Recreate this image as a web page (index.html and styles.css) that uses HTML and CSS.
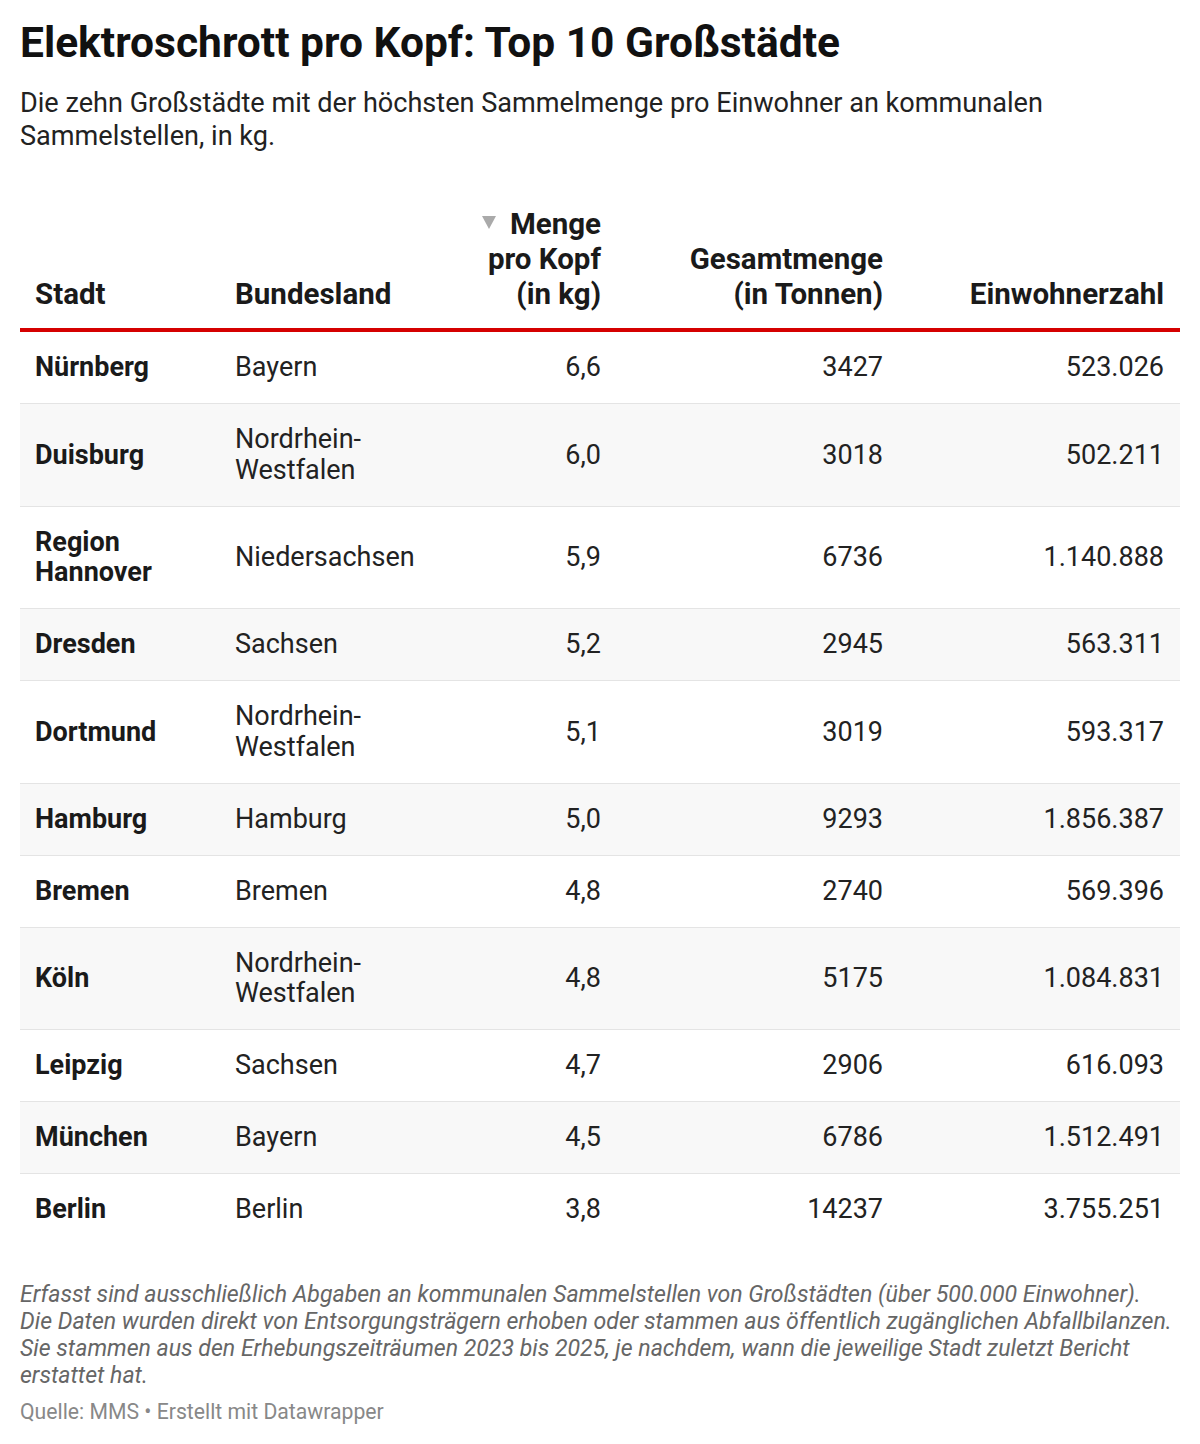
FILE: index.html
```html
<!DOCTYPE html>
<html lang="de">
<head>
<meta charset="utf-8">
<title>Elektroschrott pro Kopf</title>
<link rel="stylesheet" href="styles.css">
</head>
<body>
<div class="chart">
  <h1 class="title">Elektroschrott pro Kopf: Top 10 Großstädte</h1>
  <p class="subtitle">Die zehn Großstädte mit der höchsten Sammelmenge pro Einwohner an kommunalen Sammelstellen, in kg.</p>
  <table class="data">
    <colgroup>
      <col class="c1"><col class="c2"><col class="c3"><col class="c4"><col class="c5">
    </colgroup>
    <thead>
      <tr>
        <th class="left">Stadt</th>
        <th class="left">Bundesland</th>
        <th class="right"><span class="sort"></span>Menge<br>pro Kopf<br>(in kg)</th>
        <th class="right">Gesamtmenge<br>(in Tonnen)</th>
        <th class="right">Einwohnerzahl</th>
      </tr>
    </thead>
    <tbody>
      <tr><td class="city">Nürnberg</td><td>Bayern</td><td class="num">6,6</td><td class="num">3427</td><td class="num">523.026</td></tr>
      <tr><td class="city">Duisburg</td><td>Nordrhein-<br>Westfalen</td><td class="num">6,0</td><td class="num">3018</td><td class="num">502.211</td></tr>
      <tr><td class="city">Region<br>Hannover</td><td>Niedersachsen</td><td class="num">5,9</td><td class="num">6736</td><td class="num">1.140.888</td></tr>
      <tr><td class="city">Dresden</td><td>Sachsen</td><td class="num">5,2</td><td class="num">2945</td><td class="num">563.311</td></tr>
      <tr><td class="city">Dortmund</td><td>Nordrhein-<br>Westfalen</td><td class="num">5,1</td><td class="num">3019</td><td class="num">593.317</td></tr>
      <tr><td class="city">Hamburg</td><td>Hamburg</td><td class="num">5,0</td><td class="num">9293</td><td class="num">1.856.387</td></tr>
      <tr><td class="city">Bremen</td><td>Bremen</td><td class="num">4,8</td><td class="num">2740</td><td class="num">569.396</td></tr>
      <tr><td class="city">Köln</td><td>Nordrhein-<br>Westfalen</td><td class="num">4,8</td><td class="num">5175</td><td class="num">1.084.831</td></tr>
      <tr><td class="city">Leipzig</td><td>Sachsen</td><td class="num">4,7</td><td class="num">2906</td><td class="num">616.093</td></tr>
      <tr><td class="city">München</td><td>Bayern</td><td class="num">4,5</td><td class="num">6786</td><td class="num">1.512.491</td></tr>
      <tr><td class="city">Berlin</td><td>Berlin</td><td class="num">3,8</td><td class="num">14237</td><td class="num">3.755.251</td></tr>
    </tbody>
  </table>
  <p class="notes">Erfasst sind ausschließlich Abgaben an kommunalen Sammelstellen von Großstädten (über 500.000 Einwohner).<br>Die Daten wurden direkt von Entsorgungsträgern erhoben oder stammen aus öffentlich zugänglichen Abfallbilanzen. Sie stammen aus den Erhebungszeiträumen 2023 bis 2025, je nachdem, wann die jeweilige Stadt zuletzt Bericht erstattet hat.</p>
  <p class="source">Quelle: MMS • Erstellt mit Datawrapper</p>
</div>
</body>
</html>
```

FILE: styles.css
```css
* { box-sizing: border-box; }
html, body { margin: 0; padding: 0; background: #fff; }
body {
  font-family: Roboto, "Liberation Sans", Arial, sans-serif;
  color: #1d1d1d;
}
.chart {
  padding: 18px 20px 0 20px;
}
.title {
  margin: 0;
  font-size: 42.5px;
  line-height: 50px;
  font-weight: 700;
  color: #111;
}
.subtitle {
  margin: 19px 0 0 0;
  font-size: 27.1px;
  line-height: 33px;
  color: #222;
}
.data {
  width: 100%;
  margin-top: 54px;
  border-collapse: collapse;
  table-layout: fixed;
  font-size: 27px;
}
.c1 { width: 200px; }
.c2 { width: 230px; }
.c3 { width: 167px; }
.c4 { width: 282px; }
.c5 { width: 281px; }
th {
  font-weight: 700;
  font-size: 29.5px;
  line-height: 35px;
  vertical-align: bottom;
  padding: 0 16px 16px 15px;
  border-bottom: 4px solid #d50000;
  color: #1a1a1a;
}
th.left { text-align: left; }
th.right { text-align: right; }
.sort {
  display: inline-block;
  width: 0; height: 0;
  border-left: 7px solid transparent;
  border-right: 7px solid transparent;
  border-top: 13px solid #aaa;
  margin-right: 14px;
  vertical-align: 5px;
}
td {
  padding: 20.25px 16px 20.25px 15px;
  line-height: 30.5px;
  vertical-align: middle;
  border-bottom: 1px solid #e4e4e4;
  color: #222;
}
tbody tr:nth-child(even) td { background: #f8f8f8; }
tbody tr:last-child td { border-bottom: none; }
td.city { font-weight: 700; color: #1a1a1a; }
td.num { text-align: right; }
.notes {
  margin: 36px 0 0 0;
  font-style: italic;
  font-size: 23.1px;
  line-height: 27px;
  color: #666;
}
.source {
  margin: 9px 0 0 0;
  font-size: 21.2px;
  line-height: 27px;
  color: #888;
}
```
